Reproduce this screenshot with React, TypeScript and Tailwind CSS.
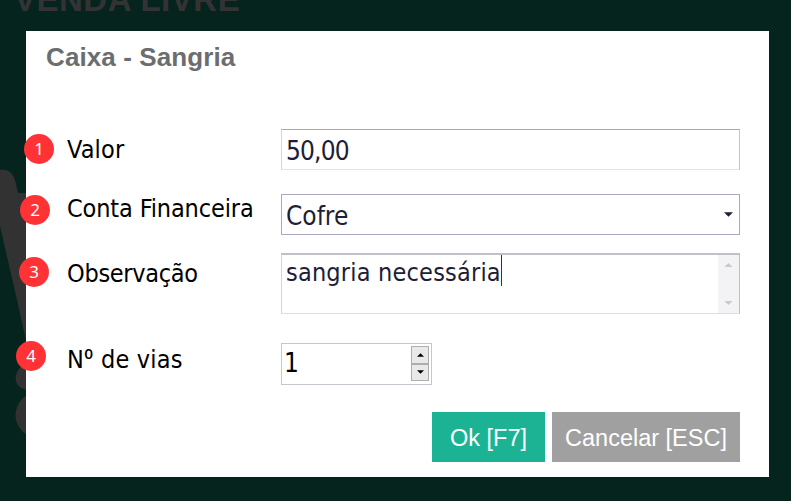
import type { ReactNode } from "react";

function Badge({ n, className }: { n: number; className: string }) {
  return (
    <span
      className={`absolute flex h-[30px] w-[30px] items-center justify-center rounded-full bg-[#ff3335] pb-px font-['Noto_Sans',sans-serif] text-[17px] leading-none text-white ${className}`}
    >
      {n}
    </span>
  );
}

function Label({ children, className }: { children: ReactNode; className: string }) {
  return (
    <label className={`w-[214px] shrink-0 whitespace-nowrap text-[25px] leading-[30px] text-black ${className}`}>
      {children}
    </label>
  );
}

function Arrow({ down, className }: { down?: boolean; className: string }) {
  return (
    <svg viewBox="0 0 8 4" className={className} fill="currentColor">
      <path d={down ? "M0 0h8L4 4z" : "M0 4h8L4 0z"} />
    </svg>
  );
}

export default function App() {
  return (
    <div className="relative h-[501px] w-[791px] overflow-hidden bg-[#05241e] pl-[26px] pt-[31px]">
      <div className="absolute left-[14px] top-[-19px] whitespace-nowrap font-['Liberation_Sans',sans-serif] text-[33px] font-bold leading-[38px] tracking-[0.5px] text-[#333333]">
        VENDA LIVRE
      </div>
      <svg className="absolute left-0 top-0" width="27" height="501" fill="#323232">
        <path d="M0 170c8-1 13 3 15 10l3 13h9v152L17 300 0 226z" />
        <path d="M27 358l-8 11c-6 8-4 19 8 21z" />
        <circle cx="38" cy="415" r="22.5" />
      </svg>

      <form className="relative flex h-[446px] w-[743px] flex-col bg-white pl-[41px] pr-[29px] font-['DejaVu_Sans_Condensed','DejaVu_Sans',sans-serif] [font-stretch:condensed]">
        <h1 className="-ml-[21px] mt-[11px] h-[30px] font-['Liberation_Sans',sans-serif] text-[26px] font-bold leading-[30px] tracking-[0.1px] text-[#6b6e70]">
          Caixa - Sangria
        </h1>

        <div className="mt-[57px] flex h-[41px]">
          <Label className="mt-[6px] tracking-[0.2px]">Valor</Label>
          <div className="flex flex-1 border border-t-[#aaa6b8] border-r-[#c4c4ce] border-b-[#e3e3ea] border-l-[#d5d4df] pl-1 text-[26px] leading-[42px] tracking-[-0.85px] text-[#201d36]">
            50,00
          </div>
        </div>

        <div className="mt-[24px] flex h-[41px]">
          <Label className="tracking-[-0.13px]">Conta Financeira</Label>
          <div className="flex flex-1 items-center justify-between border border-[#aaa7c0] pl-1 pr-[6px] text-[26px] leading-[40px] text-[#201d36]">
            <span className="pt-[2px]">Cofre</span>
            <Arrow down className="h-[5px] w-[9px]" />
          </div>
        </div>

        <div className="mt-[18px] flex h-[61px]">
          <Label className="mt-[6px] tracking-[-0.3px]">Observação</Label>
          <div className="flex flex-1 justify-between border border-t-2 border-t-[#c0c0c9] border-r-[#bfbfc8] border-b-[#dedee4] border-l-[#d3d3dc] pl-1 text-[25px] leading-[36px] text-[#201d36]">
            <div className="flex">
              <span className="tracking-[0.2px]">sangria necessária</span>
              <span className="h-[31px] w-px bg-[#333]" />
            </div>
            <div className="flex w-[21px] flex-col items-center justify-between bg-[#f3f3f6] py-[8px] text-[#c8c8cd]">
              <Arrow className="h-[4px] w-[9px]" />
              <Arrow down className="h-[4px] w-[9px]" />
            </div>
          </div>
        </div>

        <div className="mt-[29px] flex h-[42px]">
          <Label className="mt-[2px] tracking-[0.2px]">
            N<span className="align-[-3px] font-['Open_Sans',sans-serif] text-[30px] leading-[0]">º</span> de vias
          </Label>
          <div className="flex w-[151px] justify-between border-[1.5px] border-[#c6c6ce] pl-[2px] pr-[2px] text-[26px] leading-[38px] text-black">
            <span>1</span>
            <div className="mt-[2px] flex h-[35px] w-[18px] flex-col">
              <div className="flex flex-1 items-center justify-center border border-[#adadad] bg-[#e9e9e9]">
                <Arrow className="h-[4px] w-[7px]" />
              </div>
              <div className="flex flex-1 items-center justify-center border border-[#adadad] bg-[#e9e9e9]">
                <Arrow down className="h-[4px] w-[7px]" />
              </div>
            </div>
          </div>
        </div>

        <div className="mt-[27px] flex justify-end gap-[7px] font-['Liberation_Sans',sans-serif] text-[23.5px] text-white">
          <button type="button" className="h-[50px] w-[113px] whitespace-nowrap bg-[#1cb394] pt-[3px]">
            Ok [F7]
          </button>
          <button type="button" className="h-[50px] w-[188px] whitespace-nowrap bg-[#a0a0a0] pt-[3px]">
            Cancelar [ESC]
          </button>
        </div>

        <Badge n={1} className="-left-[2px] top-[103px]" />
        <Badge n={2} className="-left-[6px] top-[164px]" />
        <Badge n={3} className="-left-[7px] top-[226px]" />
        <Badge n={4} className="-left-[10px] top-[310px]" />
      </form>
    </div>
  );
}
